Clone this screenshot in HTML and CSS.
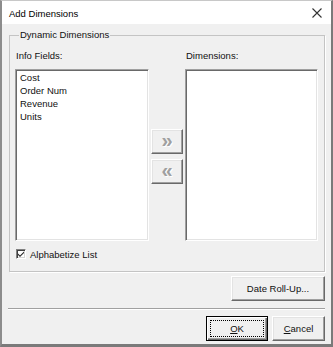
FILE: index.html
```html
<!DOCTYPE html>
<html>
<head>
<meta charset="utf-8">
<link rel="stylesheet" href="styles.css">
</head>
<body>
<div class="window">
  <div class="titlebar">
    <span class="title">Add Dimensions</span>
    <svg class="close" width="10" height="10" viewBox="0 0 10 10"><path d="M0.5 0.5 L9.5 9.5 M9.5 0.5 L0.5 9.5" stroke="#333" stroke-width="1.1" fill="none"/></svg>
  </div>
  <div class="client">
    <fieldset class="group">
      <legend class="legend">Dynamic Dimensions</legend>
      <div class="lists">
        <div class="label">Info Fields:</div>
        <div></div>
        <div class="label">Dimensions:</div>
        <div class="listbox">
          <div class="item">Cost</div>
          <div class="item">Order Num</div>
          <div class="item">Revenue</div>
          <div class="item">Units</div>
        </div>
        <div class="movers">
          <button class="btn mover" disabled>&raquo;</button>
          <button class="btn mover" disabled>&laquo;</button>
        </div>
        <div class="listbox"></div>
      </div>
      <div class="check">
        <span class="box"><svg width="8" height="8" viewBox="0 0 8 8"><path d="M1 3.5 L3 5.5 L7 1.5 L7 3 L3 7 L1 5 Z" fill="#222"/></svg></span>
        <span>Alphabetize List</span>
      </div>
    </fieldset>
    <div class="row-right rollup-row">
      <button class="btn rollup">Date Roll-Up...</button>
    </div>
    <div class="separator"></div>
    <div class="row-right dialog-buttons">
      <button class="btn default ok"><span class="focus"><u>O</u>K</span></button>
      <button class="btn cancel"><u>C</u>ancel</button>
    </div>
  </div>
</div>
</body>
</html>
```
FILE: styles.css
```css
html, body {
  margin: 0;
  padding: 0;
  background: #ffffff;
}
body {
  font-family: "Liberation Sans", Arial, sans-serif;
  font-size: 9.5px;
  color: #111;
}
.window {
  width: 333px;
  height: 347px;
  box-sizing: border-box;
  border-top: 1px solid #c8c8c8;
  border-left: 2px solid #8c8c8c;
  border-right: 2px solid #7a7a7a;
  border-bottom: 3px solid #7a7a7a;
  display: flex;
  flex-direction: column;
  background: #f0f0f0;
}
.titlebar {
  height: 23px;
  flex: none;
  background: #ffffff;
  display: flex;
  align-items: center;
  justify-content: space-between;
  padding: 0 9px 0 7px;
}
.title {
  font-size: 9.5px;
  color: #000;
  padding-top: 1px;
}
.close {
  display: block;
  margin-top: 1px;
}
.client {
  flex: 1;
  display: flex;
  flex-direction: column;
}
.group {
  margin: 5px 6px 0 7px;
  padding: 9px 0 11px 5px;
  border: 1px solid #c4c4c4;
  box-shadow: 1px 1px 0 #ffffff;
  min-width: 0;
}
.legend {
  padding: 0 1px;
  margin-left: 4px;
  line-height: 12px;
  height: 12px;
  color: #111;
}
.lists {
  display: grid;
  grid-template-columns: 134px 32px 133px;
  column-gap: 2px;
}
.label {
  line-height: 12px;
  height: 12px;
  margin: 0 0 7px 1px;
}
.listbox {
  height: 172px;
  box-sizing: border-box;
  background: #ffffff;
  border: 1px solid;
  border-color: #a0a0a0 #ffffff #ffffff #a0a0a0;
  box-shadow: inset 1px 1px 0 #696969, inset -1px -1px 0 #e3e3e3;
  padding: 1px 0 0 4px;
}
.item {
  line-height: 13px;
  height: 13px;
  color: #111;
}
.movers {
  display: flex;
  flex-direction: column;
  gap: 5px;
  padding-top: 60px;
}
.btn {
  font-family: "Liberation Sans", Arial, sans-serif;
  font-size: 9.5px;
  color: #111;
  background: #f0f0f0;
  border: 1px solid;
  border-color: #ffffff #696969 #696969 #ffffff;
  box-shadow: inset -1px -1px 0 #a0a0a0, inset 1px 1px 0 #e3e3e3;
  padding: 0;
  margin: 0;
  box-sizing: border-box;
  display: flex;
  align-items: center;
  justify-content: center;
}
.mover {
  width: 32px;
  height: 25px;
  font-size: 20px;
  font-weight: bold;
  line-height: 1;
  color: #a0a0a0;
  text-shadow: 1px 1px 0 #ffffff;
  padding-bottom: 3px;
}
.check {
  display: flex;
  align-items: center;
  height: 12px;
  margin: 7px 0 0 1px;
  gap: 4px;
}
.box {
  width: 10px;
  height: 10px;
  box-sizing: border-box;
  background: #fff;
  border: 1px solid;
  border-color: #808080 #ffffff #ffffff #808080;
  box-shadow: inset 1px 1px 0 #404040, inset -1px -1px 0 #d4d4d4;
  display: flex;
  align-items: center;
  justify-content: center;
}
.box svg {
  display: block;
}
.row-right {
  display: flex;
  justify-content: flex-end;
  margin-right: 6px;
}
.rollup-row {
  margin-top: 4px;
}
.rollup {
  width: 94px;
  height: 25px;
}
.separator {
  margin: 7px 6px 0 6px;
  height: 1px;
  background: #a0a0a0;
  border-bottom: 1px solid #ffffff;
}
.dialog-buttons {
  margin-top: 6px;
  gap: 4px;
}
.ok {
  width: 62px;
  height: 25px;
}
.default {
  border: 1px solid #000;
  box-shadow: inset 1px 1px 0 #ffffff, inset -1px -1px 0 #696969, inset -2px -2px 0 #a0a0a0;
  padding: 3px;
}
.focus {
  flex: 1;
  align-self: stretch;
  border: 1px dotted #000;
  display: flex;
  align-items: center;
  justify-content: center;
}
.cancel {
  width: 53px;
  height: 25px;
}
u {
  text-decoration: underline;
  text-underline-offset: 1px;
}
```
